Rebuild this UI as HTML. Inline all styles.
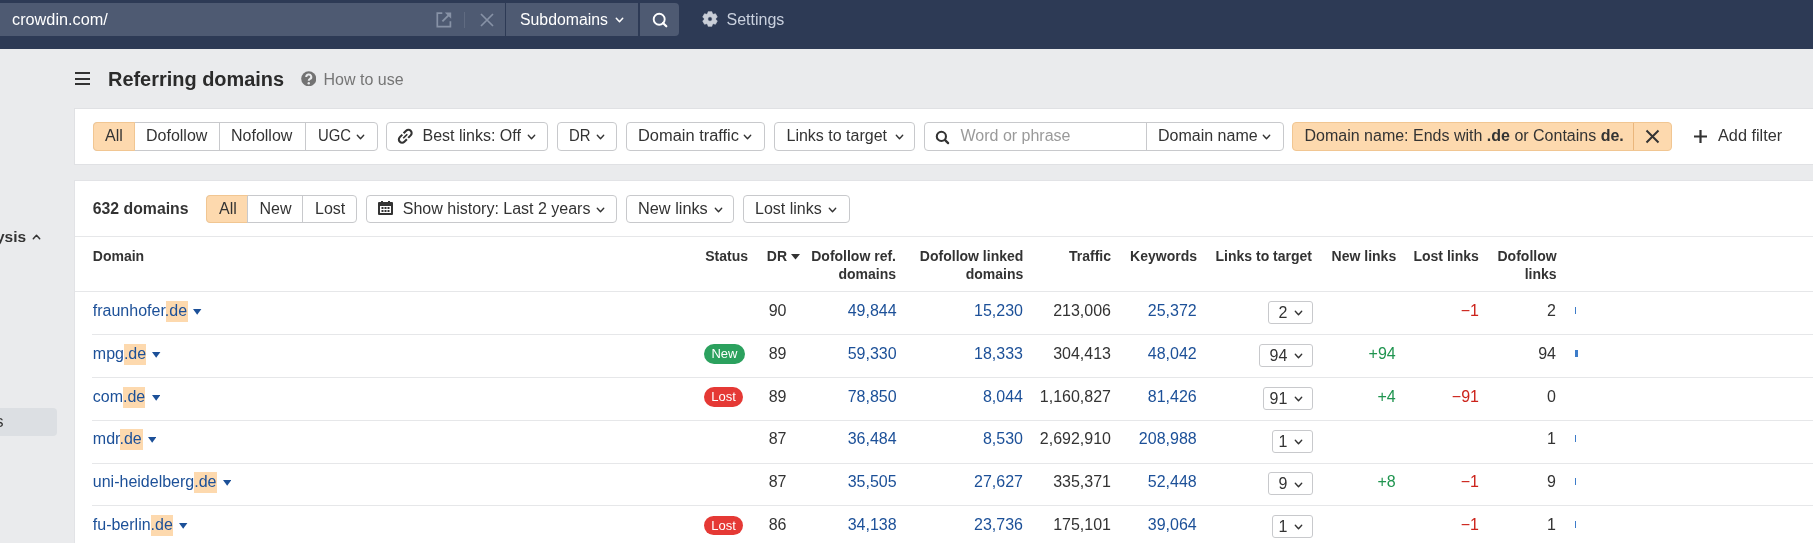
<!DOCTYPE html>
<html><head><meta charset="utf-8"><style>
html,body{margin:0;padding:0;width:1813px;height:543px;overflow:hidden;background:#eaebed;font-family:"Liberation Sans", sans-serif;}
.t{position:absolute;white-space:nowrap;line-height:1;-webkit-font-smoothing:antialiased;}
#root{position:absolute;left:0;top:0;width:1813px;height:543px;will-change:transform;}
.b{position:absolute;box-sizing:content-box;}
</style></head><body><div id="root">
<div class="b" style="left:0px;top:0px;width:1813px;height:49px;background:#2d3a55"></div>
<div class="b" style="left:0px;top:3px;width:505px;height:33px;background:#4e5a72"></div>
<div class="b" style="left:506px;top:3px;width:132px;height:33px;background:#4e5a72"></div>
<div class="b" style="left:640px;top:3px;width:39px;height:33px;background:#4e5a72;border-radius:0 4px 4px 0"></div>
<div class="t" style="left:11.50px;top:12.26px;font-size:16px;font-weight:400;color:#ffffff;transform:scaleX(1.017);transform-origin:left center;">crowdin.com/</div>
<svg class="b" style="left:436px;top:12px" width="16" height="16" viewBox="0 0 16 16"><path d="M6.3 1.2 H1.3 V14.6 H14.4 V9.2" fill="none" stroke="#8792a6" stroke-width="1.7"/><path d="M8.8 0.4 H15.2 V6.8 Z" fill="#8792a6"/><path d="M6.4 9.4 L13.2 2.6" stroke="#8792a6" stroke-width="1.9"/></svg>
<div class="b" style="left:464px;top:12px;width:1px;height:16px;background:#606b81"></div>
<svg class="b" style="left:479px;top:12px" width="16" height="16" viewBox="0 0 16 16"><path d="M2 2 L14 14 M14 2 L2 14" stroke="#8792a6" stroke-width="1.7"/></svg>
<div class="t" style="left:520.30px;top:12.26px;font-size:16px;font-weight:400;color:#ffffff;transform:scaleX(0.988);transform-origin:left center;">Subdomains</div>
<svg class="b" style="left:615.00px;top:16.80px" width="9" height="6" viewBox="-1 -1 9 6"><path d="M0.3 0.3 L3.5 3.7 L6.7 0.3" fill="none" stroke="#ffffff" stroke-width="1.5" stroke-linecap="round" stroke-linejoin="round"/></svg>
<svg class="b" style="left:652px;top:12px" width="16" height="16" viewBox="0 0 16 16"><circle cx="7.2" cy="7.2" r="5.5" fill="none" stroke="#ffffff" stroke-width="1.9"/><path d="M11 11 L14.3 14.3" stroke="#ffffff" stroke-width="2.2" stroke-linecap="round"/></svg>
<svg class="b" style="left:701.5px;top:11.4px" width="16" height="16" viewBox="0 0 16 16"><path fill="#c9ced8" fill-rule="evenodd" stroke="#c9ced8" stroke-width="0.6" stroke-linejoin="round" d="M5.60 2.61 L6.16 0.63 L9.84 0.63 L10.40 2.61 L11.47 3.23 L13.47 2.72 L15.31 5.91 L13.87 7.38 L13.87 8.62 L15.31 10.09 L13.47 13.28 L11.47 12.77 L10.40 13.39 L9.84 15.37 L6.16 15.37 L5.60 13.39 L4.53 12.77 L2.53 13.28 L0.69 10.09 L2.13 8.62 L2.13 7.38 L0.69 5.91 L2.53 2.72 L4.53 3.23 Z M10.2 8 A2.2 2.2 0 1 0 5.8 8 A2.2 2.2 0 1 0 10.2 8 Z"/></svg>
<div class="t" style="left:726.50px;top:12.26px;font-size:16px;font-weight:400;color:#c9d0de;">Settings</div>
<div class="b" style="left:75px;top:72px;width:15px;height:2px;background:#333"></div>
<div class="b" style="left:75px;top:77.6px;width:15px;height:2px;background:#333"></div>
<div class="b" style="left:75px;top:83.2px;width:15px;height:2px;background:#333"></div>
<div class="t" style="left:108.30px;top:70.38px;font-size:19.4px;font-weight:700;color:#2b2b2b;transform:scaleX(1.028);transform-origin:left center;">Referring domains</div>
<svg class="b" style="left:300.8px;top:70.6px" width="15.5" height="15.5" viewBox="0 0 16 16"><circle cx="8" cy="8" r="7.8" fill="#737373"/><path d="M5.4 6.1 A2.6 2.5 0 1 1 9.3 8.2 C8.3 8.8 8 9.2 8 10.1" fill="none" stroke="#eaebed" stroke-width="2.1" stroke-linecap="butt"/><circle cx="8" cy="12.6" r="1.25" fill="#eaebed"/></svg>
<div class="t" style="left:323.50px;top:71.56px;font-size:16px;font-weight:400;color:#757575;">How to use</div>
<div class="b" style="left:75px;top:109px;width:1738px;height:55px;background:#fff;box-shadow:0 0 0 1px #e0e1e4"></div>
<div class="b" style="left:93px;top:122px;width:283px;height:27px;border:1px solid #c8c9cc;border-radius:4px;background:#fff"></div>
<div class="b" style="left:93px;top:122px;width:40px;height:27px;background:#fdd9ae;border:1px solid #f1c692;border-radius:4px 0 0 4px"></div>
<div class="b" style="left:219px;top:123px;width:1px;height:27px;background:#c8c9cc"></div>
<div class="b" style="left:305px;top:123px;width:1px;height:27px;background:#c8c9cc"></div>
<div class="t" style="left:105.00px;top:128.26px;font-size:16px;font-weight:400;color:#333;">All</div>
<div class="t" style="left:146.00px;top:128.26px;font-size:16px;font-weight:400;color:#333;">Dofollow</div>
<div class="t" style="left:231.00px;top:128.26px;font-size:16px;font-weight:400;color:#333;">Nofollow</div>
<div class="t" style="left:317.50px;top:128.26px;font-size:16px;font-weight:400;color:#333;transform:scaleX(0.93);transform-origin:left center;">UGC</div>
<svg class="b" style="left:356.00px;top:133.80px" width="9" height="6" viewBox="-1 -1 9 6"><path d="M0.3 0.3 L3.5 3.7 L6.7 0.3" fill="none" stroke="#333" stroke-width="1.4" stroke-linecap="round" stroke-linejoin="round"/></svg>
<div class="b" style="left:386px;top:122px;width:160px;height:27px;border:1px solid #c8c9cc;border-radius:4px;background:#fff"></div>
<svg class="b" style="left:395.8px;top:127px" width="18.5" height="18.5" viewBox="0 0 24 24"><g transform="rotate(-45 12 12)" fill="none" stroke="#333" stroke-linecap="butt"><path stroke-width="2.7" d="M10.8 7.8 H6.2 A4.2 4.2 0 0 0 6.2 16.2 H10.8"/><path stroke-width="2.7" d="M13.2 7.8 H17.8 A4.2 4.2 0 0 1 17.8 16.2 H13.2"/><path stroke-width="2.2" d="M8.3 12 H15.7"/></g></svg>
<div class="t" style="left:422.50px;top:128.26px;font-size:16px;font-weight:400;color:#333;">Best links: Off</div>
<svg class="b" style="left:527.00px;top:133.80px" width="9" height="6" viewBox="-1 -1 9 6"><path d="M0.3 0.3 L3.5 3.7 L6.7 0.3" fill="none" stroke="#333" stroke-width="1.4" stroke-linecap="round" stroke-linejoin="round"/></svg>
<div class="b" style="left:557px;top:122px;width:58px;height:27px;border:1px solid #c8c9cc;border-radius:4px;background:#fff"></div>
<div class="t" style="left:569.00px;top:128.26px;font-size:16px;font-weight:400;color:#333;transform:scaleX(0.93);transform-origin:left center;">DR</div>
<svg class="b" style="left:596.00px;top:133.80px" width="9" height="6" viewBox="-1 -1 9 6"><path d="M0.3 0.3 L3.5 3.7 L6.7 0.3" fill="none" stroke="#333" stroke-width="1.4" stroke-linecap="round" stroke-linejoin="round"/></svg>
<div class="b" style="left:626px;top:122px;width:137px;height:27px;border:1px solid #c8c9cc;border-radius:4px;background:#fff"></div>
<div class="t" style="left:638.00px;top:128.26px;font-size:16px;font-weight:400;color:#333;transform:scaleX(1.026);transform-origin:left center;">Domain traffic</div>
<svg class="b" style="left:743.00px;top:133.80px" width="9" height="6" viewBox="-1 -1 9 6"><path d="M0.3 0.3 L3.5 3.7 L6.7 0.3" fill="none" stroke="#333" stroke-width="1.4" stroke-linecap="round" stroke-linejoin="round"/></svg>
<div class="b" style="left:774px;top:122px;width:139px;height:27px;border:1px solid #c8c9cc;border-radius:4px;background:#fff"></div>
<div class="t" style="left:786.50px;top:128.26px;font-size:16px;font-weight:400;color:#333;">Links to target</div>
<svg class="b" style="left:894.50px;top:133.80px" width="9" height="6" viewBox="-1 -1 9 6"><path d="M0.3 0.3 L3.5 3.7 L6.7 0.3" fill="none" stroke="#333" stroke-width="1.4" stroke-linecap="round" stroke-linejoin="round"/></svg>
<div class="b" style="left:924px;top:122px;width:358px;height:27px;border:1px solid #c8c9cc;border-radius:4px;background:#fff"></div>
<div class="b" style="left:1146px;top:123px;width:1px;height:27px;background:#c8c9cc"></div>
<svg class="b" style="left:935px;top:129.7px" width="15" height="15" viewBox="0 0 16 16"><circle cx="6.8" cy="6.8" r="4.9" fill="none" stroke="#333" stroke-width="2.2"/><path d="M10.5 10.5 L14 14" stroke="#333" stroke-width="2.4" stroke-linecap="round"/></svg>
<div class="t" style="left:960.50px;top:128.26px;font-size:16px;font-weight:400;color:#9a9a9a;">Word or phrase</div>
<div class="t" style="left:1158.00px;top:128.26px;font-size:16px;font-weight:400;color:#333;">Domain name</div>
<svg class="b" style="left:1261.50px;top:133.80px" width="9" height="6" viewBox="-1 -1 9 6"><path d="M0.3 0.3 L3.5 3.7 L6.7 0.3" fill="none" stroke="#333" stroke-width="1.4" stroke-linecap="round" stroke-linejoin="round"/></svg>
<div class="b" style="left:1292px;top:122px;width:378px;height:27px;border:1px solid #f1c692;border-radius:4px;background:#fdd9ae"></div>
<div class="b" style="left:1633px;top:123px;width:1px;height:27px;background:#eab67c"></div>
<div class="t" style="left:1304.50px;top:128.26px;font-size:16px;font-weight:400;color:#333;">Domain name: Ends with <b>.de</b> or Contains <b>de.</b></div>
<svg class="b" style="left:1645px;top:129px" width="15" height="15" viewBox="0 0 15 15"><path d="M1.5 1.5 L13.5 13.5 M13.5 1.5 L1.5 13.5" stroke="#333" stroke-width="2"/></svg>
<svg class="b" style="left:1693px;top:129px" width="15" height="15" viewBox="0 0 15 15"><path d="M7.5 1 V14 M1 7.5 H14" stroke="#333" stroke-width="2.2"/></svg>
<div class="t" style="left:1718.00px;top:128.26px;font-size:16px;font-weight:400;color:#333;transform:scaleX(1.016);transform-origin:left center;">Add filter</div>
<div class="b" style="left:75px;top:181px;width:1738px;height:362px;background:#fff;box-shadow:0 0 0 1px #e2e3e6"></div>
<div class="t" style="left:92.80px;top:201.43px;font-size:15.8px;font-weight:700;color:#333;">632 domains</div>
<div class="b" style="left:206px;top:195px;width:149px;height:26px;border:1px solid #c8c9cc;border-radius:4px;background:#fff"></div>
<div class="b" style="left:206px;top:195px;width:40px;height:26px;background:#fdd9ae;border:1px solid #f1c692;border-radius:4px 0 0 4px"></div>
<div class="b" style="left:247px;top:196px;width:1px;height:27px;background:#c8c9cc"></div>
<div class="b" style="left:302px;top:196px;width:1px;height:27px;background:#c8c9cc"></div>
<div class="t" style="left:219.00px;top:201.26px;font-size:16px;font-weight:400;color:#333;">All</div>
<div class="t" style="left:259.50px;top:201.26px;font-size:16px;font-weight:400;color:#333;">New</div>
<div class="t" style="left:315.00px;top:201.26px;font-size:16px;font-weight:400;color:#333;">Lost</div>
<div class="b" style="left:366px;top:195px;width:249px;height:26px;border:1px solid #c8c9cc;border-radius:4px;background:#fff"></div>
<svg class="b" style="left:378px;top:201px" width="15" height="14" viewBox="0 0 15 14"><rect x="0" y="1" width="15" height="13" rx="1" fill="#333"/><rect x="2" y="5" width="11" height="7" fill="#fff"/><rect x="3" y="0" width="2" height="2" fill="#333"/><rect x="10" y="0" width="2" height="2" fill="#333"/><g fill="#333"><rect x="3.5" y="6" width="2" height="2"/><rect x="6.5" y="6" width="2" height="2"/><rect x="9.5" y="6" width="2" height="2"/><rect x="3.5" y="9" width="2" height="2"/><rect x="6.5" y="9" width="2" height="2"/><rect x="9.5" y="9" width="2" height="2"/></g></svg>
<div class="t" style="left:402.80px;top:201.26px;font-size:16px;font-weight:400;color:#333;">Show history: Last 2 years</div>
<svg class="b" style="left:596.00px;top:206.50px" width="9" height="6" viewBox="-1 -1 9 6"><path d="M0.3 0.3 L3.5 3.7 L6.7 0.3" fill="none" stroke="#333" stroke-width="1.4" stroke-linecap="round" stroke-linejoin="round"/></svg>
<div class="b" style="left:626px;top:195px;width:106px;height:26px;border:1px solid #c8c9cc;border-radius:4px;background:#fff"></div>
<div class="t" style="left:638.00px;top:201.26px;font-size:16px;font-weight:400;color:#333;transform:scaleX(1.019);transform-origin:left center;">New links</div>
<svg class="b" style="left:713.50px;top:206.50px" width="9" height="6" viewBox="-1 -1 9 6"><path d="M0.3 0.3 L3.5 3.7 L6.7 0.3" fill="none" stroke="#333" stroke-width="1.4" stroke-linecap="round" stroke-linejoin="round"/></svg>
<div class="b" style="left:743px;top:195px;width:105px;height:26px;border:1px solid #c8c9cc;border-radius:4px;background:#fff"></div>
<div class="t" style="left:755.00px;top:201.26px;font-size:16px;font-weight:400;color:#333;">Lost links</div>
<svg class="b" style="left:828.00px;top:206.50px" width="9" height="6" viewBox="-1 -1 9 6"><path d="M0.3 0.3 L3.5 3.7 L6.7 0.3" fill="none" stroke="#333" stroke-width="1.4" stroke-linecap="round" stroke-linejoin="round"/></svg>
<div class="b" style="left:75px;top:236px;width:1738px;height:1px;background:#e6e7e9"></div>
<div class="t" style="left:92.80px;top:249.35px;font-size:14px;font-weight:700;color:#333;">Domain</div>
<div class="t" style="right:1065.00px;top:249.35px;font-size:14px;font-weight:700;color:#333;">Status</div>
<div class="t" style="right:1026.00px;top:249.35px;font-size:14px;font-weight:700;color:#333;">DR</div>
<svg class="b" style="left:790.5px;top:254px" width="9" height="6" viewBox="0 0 9 6"><path d="M0 0 H9 L4.5 5.5 Z" fill="#333"/></svg>
<div class="t" style="right:917.00px;top:249.35px;font-size:14px;font-weight:700;color:#333;">Dofollow ref.</div>
<div class="t" style="right:917.00px;top:266.95px;font-size:14px;font-weight:700;color:#333;">domains</div>
<div class="t" style="right:789.70px;top:249.35px;font-size:14px;font-weight:700;color:#333;">Dofollow linked</div>
<div class="t" style="right:789.70px;top:266.95px;font-size:14px;font-weight:700;color:#333;">domains</div>
<div class="t" style="right:702.00px;top:249.35px;font-size:14px;font-weight:700;color:#333;">Traffic</div>
<div class="t" style="right:616.00px;top:249.35px;font-size:14px;font-weight:700;color:#333;">Keywords</div>
<div class="t" style="right:501.00px;top:249.35px;font-size:14px;font-weight:700;color:#333;">Links to target</div>
<div class="t" style="right:416.80px;top:249.35px;font-size:14px;font-weight:700;color:#333;">New links</div>
<div class="t" style="right:334.20px;top:249.35px;font-size:14px;font-weight:700;color:#333;">Lost links</div>
<div class="t" style="right:256.40px;top:249.35px;font-size:14px;font-weight:700;color:#333;">Dofollow</div>
<div class="t" style="right:256.40px;top:266.95px;font-size:14px;font-weight:700;color:#333;">links</div>
<div class="b" style="left:75px;top:291px;width:1738px;height:1px;background:#e6e7e9"></div>
<div class="b" style="left:165.74px;top:301.00px;width:22.3px;height:21px;background:#fdd9ae"></div>
<div class="t" style="left:92.8px;top:302.96px;font-size:16px;color:#1c5098">fraunhofer.de<svg width="8.4" height="6" viewBox="0 0 8.4 6" style="margin-left:6.3px;vertical-align:1px"><path d="M0 0 H8.4 L4.2 5.8 Z" fill="#1c5098"/></svg></div>
<div class="t" style="right:1026.50px;top:302.96px;font-size:16px;font-weight:400;color:#333;">90</div>
<div class="t" style="right:916.40px;top:302.96px;font-size:16px;font-weight:400;color:#1c5098;">49,844</div>
<div class="t" style="right:790.00px;top:302.96px;font-size:16px;font-weight:400;color:#1c5098;">15,230</div>
<div class="t" style="right:702.00px;top:302.96px;font-size:16px;font-weight:400;color:#333;">213,006</div>
<div class="t" style="right:616.30px;top:302.96px;font-size:16px;font-weight:400;color:#1c5098;">25,372</div>
<div class="b" style="left:1268.4px;top:301.20px;width:42.2px;height:21px;border:1px solid #c8c9cc;border-radius:3px;background:#fff"></div>
<div class="t" style="right:525.70px;top:305.26px;font-size:16px;font-weight:400;color:#333;">2</div>
<svg class="b" style="left:1294.00px;top:310.30px" width="9" height="6" viewBox="-1 -1 9 6"><path d="M0.3 0.3 L3.5 3.7 L6.7 0.3" fill="none" stroke="#333" stroke-width="1.4" stroke-linecap="round" stroke-linejoin="round"/></svg>
<div class="t" style="right:334.00px;top:302.96px;font-size:16px;font-weight:400;color:#cc231b;">−1</div>
<div class="t" style="right:257.00px;top:302.96px;font-size:16px;font-weight:400;color:#333;">2</div>
<div class="b" style="left:1575px;top:307px;width:1.2px;height:7px;background:#3d7cc9"></div>
<div class="b" style="left:92px;top:334px;width:1721px;height:1px;background:#e6e7e9"></div>
<div class="b" style="left:123.92px;top:343.80px;width:22.3px;height:21px;background:#fdd9ae"></div>
<div class="t" style="left:92.8px;top:345.76px;font-size:16px;color:#1c5098">mpg.de<svg width="8.4" height="6" viewBox="0 0 8.4 6" style="margin-left:6.3px;vertical-align:1px"><path d="M0 0 H8.4 L4.2 5.8 Z" fill="#1c5098"/></svg></div>
<div class="t" style="left:704px;top:344.30px;width:41px;height:19.5px;border-radius:10px;background:#2ba15e;color:#fff;font-size:13px;line-height:19.5px;text-align:center">New</div>
<div class="t" style="right:1026.50px;top:345.76px;font-size:16px;font-weight:400;color:#333;">89</div>
<div class="t" style="right:916.40px;top:345.76px;font-size:16px;font-weight:400;color:#1c5098;">59,330</div>
<div class="t" style="right:790.00px;top:345.76px;font-size:16px;font-weight:400;color:#1c5098;">18,333</div>
<div class="t" style="right:702.00px;top:345.76px;font-size:16px;font-weight:400;color:#333;">304,413</div>
<div class="t" style="right:616.30px;top:345.76px;font-size:16px;font-weight:400;color:#1c5098;">48,042</div>
<div class="b" style="left:1258.6px;top:344.00px;width:52.0px;height:21px;border:1px solid #c8c9cc;border-radius:3px;background:#fff"></div>
<div class="t" style="right:525.70px;top:348.06px;font-size:16px;font-weight:400;color:#333;">94</div>
<svg class="b" style="left:1294.00px;top:353.10px" width="9" height="6" viewBox="-1 -1 9 6"><path d="M0.3 0.3 L3.5 3.7 L6.7 0.3" fill="none" stroke="#333" stroke-width="1.4" stroke-linecap="round" stroke-linejoin="round"/></svg>
<div class="t" style="right:417.30px;top:345.76px;font-size:16px;font-weight:400;color:#1f944f;">+94</div>
<div class="t" style="right:257.00px;top:345.76px;font-size:16px;font-weight:400;color:#333;">94</div>
<div class="b" style="left:1575px;top:350px;width:2.5px;height:7px;background:#3d7cc9"></div>
<div class="b" style="left:92px;top:377px;width:1721px;height:1px;background:#e6e7e9"></div>
<div class="b" style="left:123.03px;top:386.60px;width:22.3px;height:21px;background:#fdd9ae"></div>
<div class="t" style="left:92.8px;top:388.56px;font-size:16px;color:#1c5098">com.de<svg width="8.4" height="6" viewBox="0 0 8.4 6" style="margin-left:6.3px;vertical-align:1px"><path d="M0 0 H8.4 L4.2 5.8 Z" fill="#1c5098"/></svg></div>
<div class="t" style="left:704px;top:387.10px;width:39px;height:19.5px;border-radius:10px;background:#e53935;color:#fff;font-size:13px;line-height:19.5px;text-align:center">Lost</div>
<div class="t" style="right:1026.50px;top:388.56px;font-size:16px;font-weight:400;color:#333;">89</div>
<div class="t" style="right:916.40px;top:388.56px;font-size:16px;font-weight:400;color:#1c5098;">78,850</div>
<div class="t" style="right:790.00px;top:388.56px;font-size:16px;font-weight:400;color:#1c5098;">8,044</div>
<div class="t" style="right:702.00px;top:388.56px;font-size:16px;font-weight:400;color:#333;">1,160,827</div>
<div class="t" style="right:616.30px;top:388.56px;font-size:16px;font-weight:400;color:#1c5098;">81,426</div>
<div class="b" style="left:1262.6px;top:386.80px;width:48.0px;height:21px;border:1px solid #c8c9cc;border-radius:3px;background:#fff"></div>
<div class="t" style="right:525.70px;top:390.86px;font-size:16px;font-weight:400;color:#333;">91</div>
<svg class="b" style="left:1294.00px;top:395.90px" width="9" height="6" viewBox="-1 -1 9 6"><path d="M0.3 0.3 L3.5 3.7 L6.7 0.3" fill="none" stroke="#333" stroke-width="1.4" stroke-linecap="round" stroke-linejoin="round"/></svg>
<div class="t" style="right:417.30px;top:388.56px;font-size:16px;font-weight:400;color:#1f944f;">+4</div>
<div class="t" style="right:334.00px;top:388.56px;font-size:16px;font-weight:400;color:#cc231b;">−91</div>
<div class="t" style="right:257.00px;top:388.56px;font-size:16px;font-weight:400;color:#333;">0</div>
<div class="b" style="left:92px;top:420px;width:1721px;height:1px;background:#e6e7e9"></div>
<div class="b" style="left:120.36px;top:429.40px;width:22.3px;height:21px;background:#fdd9ae"></div>
<div class="t" style="left:92.8px;top:431.36px;font-size:16px;color:#1c5098">mdr.de<svg width="8.4" height="6" viewBox="0 0 8.4 6" style="margin-left:6.3px;vertical-align:1px"><path d="M0 0 H8.4 L4.2 5.8 Z" fill="#1c5098"/></svg></div>
<div class="t" style="right:1026.50px;top:431.36px;font-size:16px;font-weight:400;color:#333;">87</div>
<div class="t" style="right:916.40px;top:431.36px;font-size:16px;font-weight:400;color:#1c5098;">36,484</div>
<div class="t" style="right:790.00px;top:431.36px;font-size:16px;font-weight:400;color:#1c5098;">8,530</div>
<div class="t" style="right:702.00px;top:431.36px;font-size:16px;font-weight:400;color:#333;">2,692,910</div>
<div class="t" style="right:616.30px;top:431.36px;font-size:16px;font-weight:400;color:#1c5098;">208,988</div>
<div class="b" style="left:1271.6px;top:429.60px;width:39.0px;height:21px;border:1px solid #c8c9cc;border-radius:3px;background:#fff"></div>
<div class="t" style="right:525.70px;top:433.66px;font-size:16px;font-weight:400;color:#333;">1</div>
<svg class="b" style="left:1294.00px;top:438.70px" width="9" height="6" viewBox="-1 -1 9 6"><path d="M0.3 0.3 L3.5 3.7 L6.7 0.3" fill="none" stroke="#333" stroke-width="1.4" stroke-linecap="round" stroke-linejoin="round"/></svg>
<div class="t" style="right:257.00px;top:431.36px;font-size:16px;font-weight:400;color:#333;">1</div>
<div class="b" style="left:1575px;top:435px;width:1.2px;height:7px;background:#3d7cc9"></div>
<div class="b" style="left:92px;top:463px;width:1721px;height:1px;background:#e6e7e9"></div>
<div class="b" style="left:194.21px;top:472.20px;width:22.3px;height:21px;background:#fdd9ae"></div>
<div class="t" style="left:92.8px;top:474.16px;font-size:16px;color:#1c5098">uni-heidelberg.de<svg width="8.4" height="6" viewBox="0 0 8.4 6" style="margin-left:6.3px;vertical-align:1px"><path d="M0 0 H8.4 L4.2 5.8 Z" fill="#1c5098"/></svg></div>
<div class="t" style="right:1026.50px;top:474.16px;font-size:16px;font-weight:400;color:#333;">87</div>
<div class="t" style="right:916.40px;top:474.16px;font-size:16px;font-weight:400;color:#1c5098;">35,505</div>
<div class="t" style="right:790.00px;top:474.16px;font-size:16px;font-weight:400;color:#1c5098;">27,627</div>
<div class="t" style="right:702.00px;top:474.16px;font-size:16px;font-weight:400;color:#333;">335,371</div>
<div class="t" style="right:616.30px;top:474.16px;font-size:16px;font-weight:400;color:#1c5098;">52,448</div>
<div class="b" style="left:1268.4px;top:472.40px;width:42.2px;height:21px;border:1px solid #c8c9cc;border-radius:3px;background:#fff"></div>
<div class="t" style="right:525.70px;top:476.46px;font-size:16px;font-weight:400;color:#333;">9</div>
<svg class="b" style="left:1294.00px;top:481.50px" width="9" height="6" viewBox="-1 -1 9 6"><path d="M0.3 0.3 L3.5 3.7 L6.7 0.3" fill="none" stroke="#333" stroke-width="1.4" stroke-linecap="round" stroke-linejoin="round"/></svg>
<div class="t" style="right:417.30px;top:474.16px;font-size:16px;font-weight:400;color:#1f944f;">+8</div>
<div class="t" style="right:334.00px;top:474.16px;font-size:16px;font-weight:400;color:#cc231b;">−1</div>
<div class="t" style="right:257.00px;top:474.16px;font-size:16px;font-weight:400;color:#333;">9</div>
<div class="b" style="left:1575px;top:478px;width:1.2px;height:7px;background:#3d7cc9"></div>
<div class="b" style="left:92px;top:505px;width:1721px;height:1px;background:#e6e7e9"></div>
<div class="b" style="left:150.61px;top:515.00px;width:22.3px;height:21px;background:#fdd9ae"></div>
<div class="t" style="left:92.8px;top:516.96px;font-size:16px;color:#1c5098">fu-berlin.de<svg width="8.4" height="6" viewBox="0 0 8.4 6" style="margin-left:6.3px;vertical-align:1px"><path d="M0 0 H8.4 L4.2 5.8 Z" fill="#1c5098"/></svg></div>
<div class="t" style="left:704px;top:515.50px;width:39px;height:19.5px;border-radius:10px;background:#e53935;color:#fff;font-size:13px;line-height:19.5px;text-align:center">Lost</div>
<div class="t" style="right:1026.50px;top:516.96px;font-size:16px;font-weight:400;color:#333;">86</div>
<div class="t" style="right:916.40px;top:516.96px;font-size:16px;font-weight:400;color:#1c5098;">34,138</div>
<div class="t" style="right:790.00px;top:516.96px;font-size:16px;font-weight:400;color:#1c5098;">23,736</div>
<div class="t" style="right:702.00px;top:516.96px;font-size:16px;font-weight:400;color:#333;">175,101</div>
<div class="t" style="right:616.30px;top:516.96px;font-size:16px;font-weight:400;color:#1c5098;">39,064</div>
<div class="b" style="left:1271.6px;top:515.20px;width:39.0px;height:21px;border:1px solid #c8c9cc;border-radius:3px;background:#fff"></div>
<div class="t" style="right:525.70px;top:519.26px;font-size:16px;font-weight:400;color:#333;">1</div>
<svg class="b" style="left:1294.00px;top:524.30px" width="9" height="6" viewBox="-1 -1 9 6"><path d="M0.3 0.3 L3.5 3.7 L6.7 0.3" fill="none" stroke="#333" stroke-width="1.4" stroke-linecap="round" stroke-linejoin="round"/></svg>
<div class="t" style="right:334.00px;top:516.96px;font-size:16px;font-weight:400;color:#cc231b;">−1</div>
<div class="t" style="right:257.00px;top:516.96px;font-size:16px;font-weight:400;color:#333;">1</div>
<div class="b" style="left:1575px;top:521px;width:1.2px;height:7px;background:#3d7cc9"></div>
<div class="t" style="left:-4.00px;top:228.68px;font-size:15.5px;font-weight:700;color:#333;">ysis</div>
<svg class="b" style="left:32px;top:234px" width="9" height="6" viewBox="-1 -1 9 6"><path d="M0.3 3.7 L3.5 0.3 L6.7 3.7" fill="none" stroke="#333" stroke-width="1.5" stroke-linecap="round" stroke-linejoin="round"/></svg>
<div class="b" style="left:0px;top:408px;width:57px;height:28px;background:#dcdfe3;border-radius:0 4px 4px 0"></div>
<div class="t" style="left:-4.60px;top:414.26px;font-size:16px;font-weight:400;color:#333;">s</div>
</div></body></html>
